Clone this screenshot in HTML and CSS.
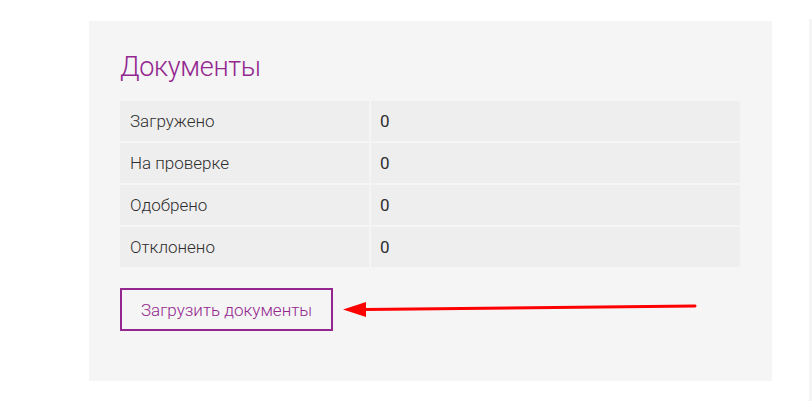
FILE: index.html
```html
<!DOCTYPE html>
<html lang="ru">
<head>
<meta charset="utf-8">
<title>Документы</title>
<link rel="stylesheet" href="styles.css">
</head>
<body>
<div class="page">
  <section class="panel">
    <h2 class="title">Документы</h2>
    <div class="table">
      <div class="cell">Загружено</div><div class="cell val">0</div>
      <div class="cell">На проверке</div><div class="cell val">0</div>
      <div class="cell">Одобрено</div><div class="cell val">0</div>
      <div class="cell">Отклонено</div><div class="cell val">0</div>
    </div>
    <div class="actions">
      <button class="btn">Загрузить документы</button>
      <svg class="arrow" width="360" height="24" viewBox="0 0 360 24">
        <path d="M22 12.5 L352 9" stroke="#ff0000" stroke-width="3" stroke-linecap="round" fill="none"/>
        <path d="M0 12.5 L23 5 L23 20 Z" fill="#ff0000"/>
      </svg>
    </div>
  </section>
  <div class="side"></div>
</div>
</body>
</html>
```
FILE: styles.css
```css
html, body {
  margin: 0;
  padding: 0;
  background: #ffffff;
}
body {
  font-family: "Liberation Sans", Arial, sans-serif;
  color: #333333;
}
.page {
  display: flex;
  align-items: flex-start;
  padding: 21px 0 0 89px;
  gap: 37px;
}
.panel {
  width: 683px;
  height: 360px;
  box-sizing: border-box;
  background: #f5f5f5;
  padding: 31px 32px 0 31px;
}
.title {
  margin: 0;
  font-family: Roboto, "Liberation Sans", sans-serif;
  font-weight: 300;
  font-size: 27px;
  line-height: 30px;
  color: #93278f;
  letter-spacing: -0.3px;
}
.table {
  margin-top: 19px;
  display: grid;
  grid-template-columns: 249px 369px;
  grid-auto-rows: 40px;
  gap: 2px;
}
.cell {
  background: #eeeeee;
  display: flex;
  align-items: center;
  padding-left: 10px;
  font-family: Roboto, "Liberation Sans", sans-serif;
  font-weight: 300;
  font-size: 17px;
  color: #2e2e2e;
}
.val {
  padding-left: 9px;
  font-weight: 400;
}
.actions {
  margin-top: 21px;
  position: relative;
  display: flex;
}
.btn {
  height: 43px;
  width: 213px;
  box-sizing: border-box;
  border: 2px solid #93278f;
  background: transparent;
  color: #93278f;
  font-family: Roboto, "Liberation Sans", sans-serif;
  font-weight: 300;
  font-size: 17px;
  padding: 0;
}
.arrow {
  position: absolute;
  left: 223px;
  top: 9px;
}
.side {
  width: 3px;
  height: 382px;
  margin-top: -2px;
  background: #f5f5f5;
}
```
